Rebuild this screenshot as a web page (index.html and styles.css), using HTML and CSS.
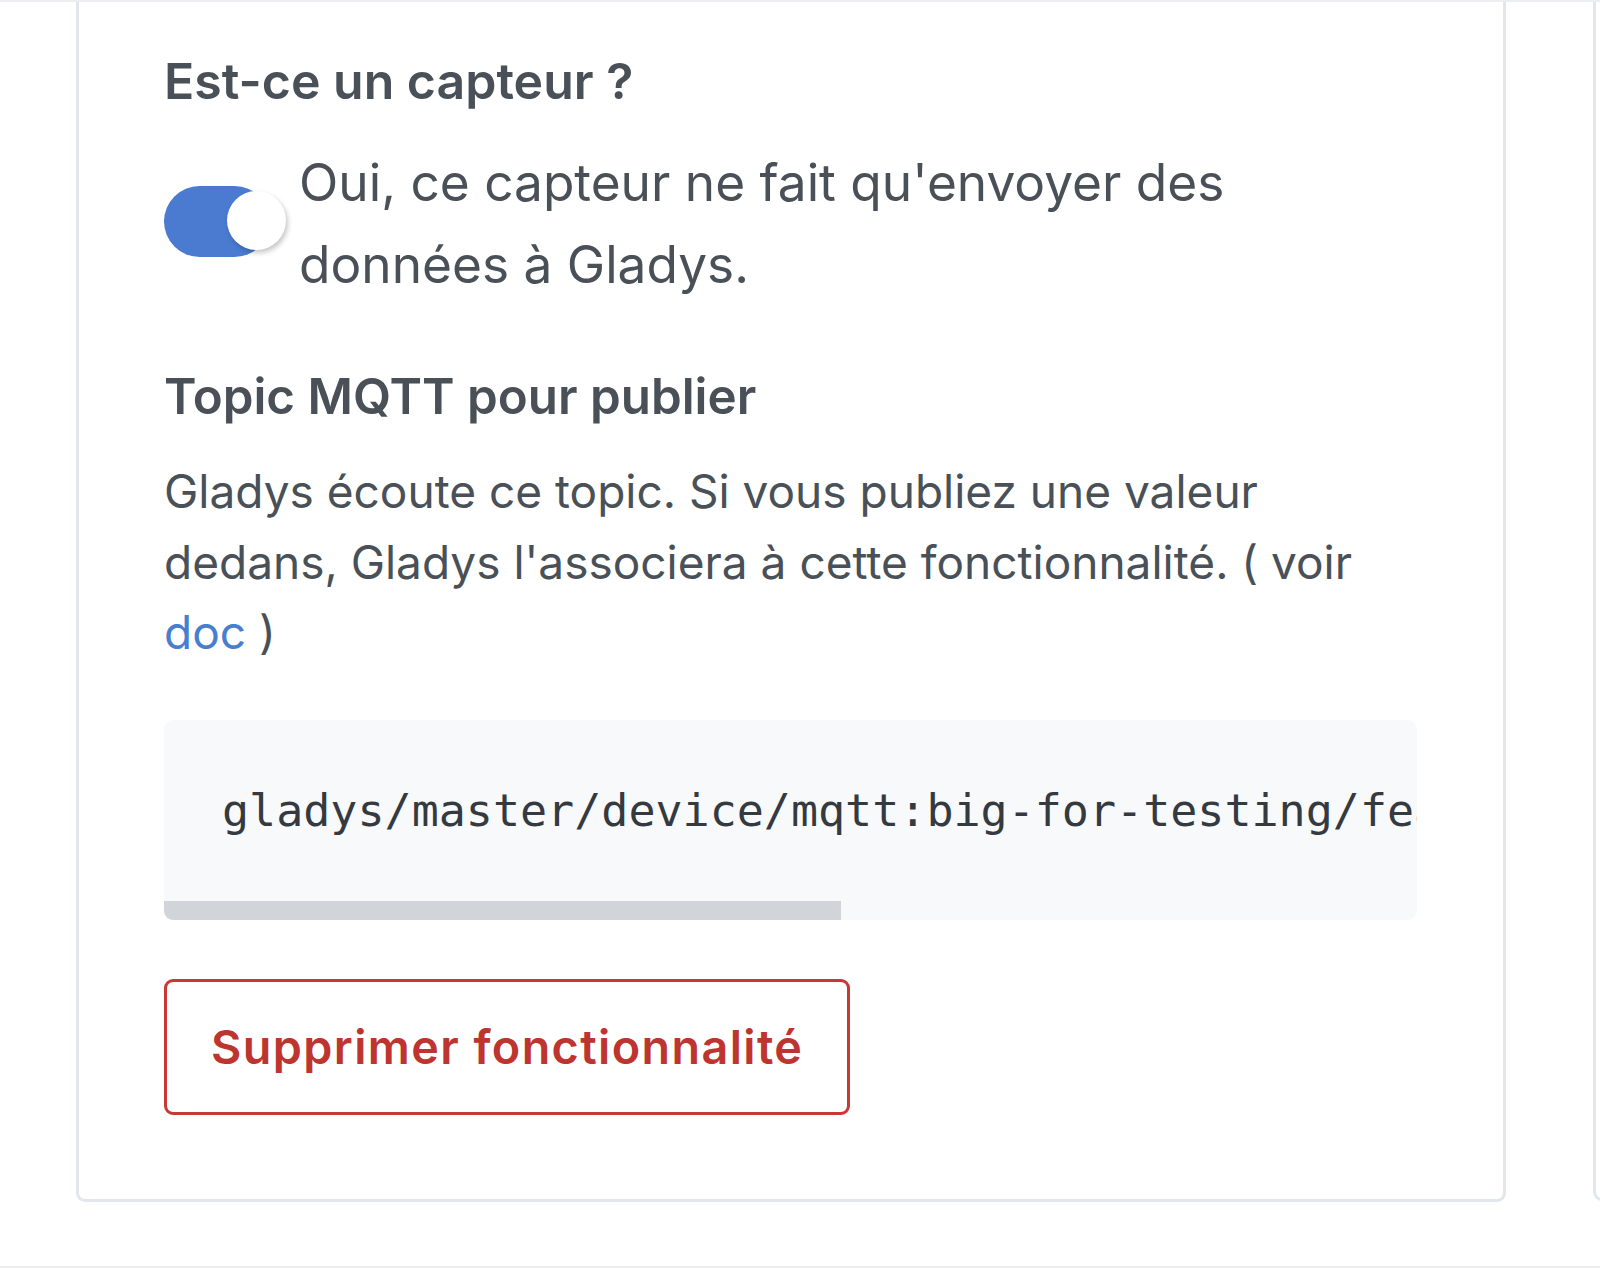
FILE: index.html
```html
<!DOCTYPE html>
<html lang="fr">
<head>
<meta charset="utf-8">
<title>Fonctionnalité MQTT</title>
<link rel="stylesheet" href="styles.css">
</head>
<body>
<div class="page">
  <div class="card">
    <div class="form-label">Est-ce un capteur ?</div>
    <label class="switch-row">
      <span class="switch">
        <span class="switch-track"></span>
        <span class="switch-knob"></span>
      </span>
      <span class="switch-text">Oui, ce capteur ne fait qu'envoyer des données à Gladys.</span>
    </label>
    <div class="form-label topic-label">Topic MQTT pour publier</div>
    <p class="help">Gladys écoute ce topic. Si vous publiez une valeur dedans, Gladys l'associera à cette fonctionnalité. ( voir <a class="link" href="#">doc</a> )</p>
    <div class="code-box">
      <div class="code-text">gladys/master/device/mqtt:big-for-testing/feature/mqtt:big-for-testing:temperature/state</div>
      <div class="scrollbar"><div class="thumb"></div></div>
    </div>
    <button class="btn-danger">Supprimer fonctionnalité</button>
  </div>
  <div class="card card-next"></div>
</div>
</body>
</html>
```

FILE: styles.css
```css
html, body {
  margin: 0;
  padding: 0;
  background: #ffffff;
}

body {
  font-family: "Inter", "Liberation Sans", sans-serif;
  color: #495057;
}

.page {
  box-sizing: border-box;
  height: 1268px;
  border-top: 2px solid #eceef1;
  border-bottom: 2px solid #eceef1;
  padding-left: 76px;
  display: flex;
  gap: 87px;
  overflow: hidden;
  align-items: flex-start;
}

.card {
  flex: 0 0 1430px;
  box-sizing: border-box;
  border: 3px solid #e3e6ea;
  border-top: 0;
  border-radius: 0 0 9px 9px;
  padding: 46px 86px 84px 85px;
  background: #fff;
}

.card-next {
  height: 1199px;
  padding: 0;
}

.form-label {
  font-size: 50px;
  font-weight: 600;
  line-height: 67px;
  color: #495057;
}

.switch-row {
  display: flex;
  align-items: flex-start;
  margin-top: 26px;
}

.switch {
  position: relative;
  flex: 0 0 122px;
  height: 71px;
  margin-top: 45px;
}

.switch-track {
  position: absolute;
  left: 0;
  top: 0;
  width: 106px;
  height: 71px;
  border-radius: 36px;
  background: #4a7bd0;
}

.switch-knob {
  position: absolute;
  left: 63px;
  top: 5px;
  width: 59px;
  height: 59px;
  border-radius: 50%;
  background: #fff;
  box-shadow: 2px 3px 5px rgba(0, 0, 0, 0.22);
}

.switch-text {
  margin-left: 13px;
  font-size: 51.4px;
  line-height: 82px;
}

.topic-label {
  margin-top: 58px;
  font-size: 49.3px;
}

.help {
  margin: 26px 0 0;
  font-size: 46px;
  line-height: 70.5px;
  padding-right: 60px;
}

.link {
  color: #467fcf;
  text-decoration: none;
}

.code-box {
  margin-top: 52px;
  width: 1253px;
  background: #f8f9fb;
  border-radius: 9px;
  overflow: hidden;
}

.code-text {
  font-family: "DejaVu Sans Mono", "Liberation Mono", monospace;
  font-size: 45px;
  line-height: 67px;
  color: #343a40;
  white-space: nowrap;
  padding: 57px 0 57px 58px;
}

.scrollbar {
  height: 19px;
}

.thumb {
  width: 54%;
  height: 100%;
  background: #d1d5da;
}

.btn-danger {
  display: block;
  margin-top: 59px;
  box-sizing: border-box;
  height: 136px;
  padding: 0 44px;
  border: 3px solid #c63a33;
  border-radius: 9px;
  background: #fff;
  color: #be3530;
  font-family: "Inter", "Liberation Sans", sans-serif;
  font-size: 46.7px;
  font-weight: 600;
  letter-spacing: 0.03em;
}
```
